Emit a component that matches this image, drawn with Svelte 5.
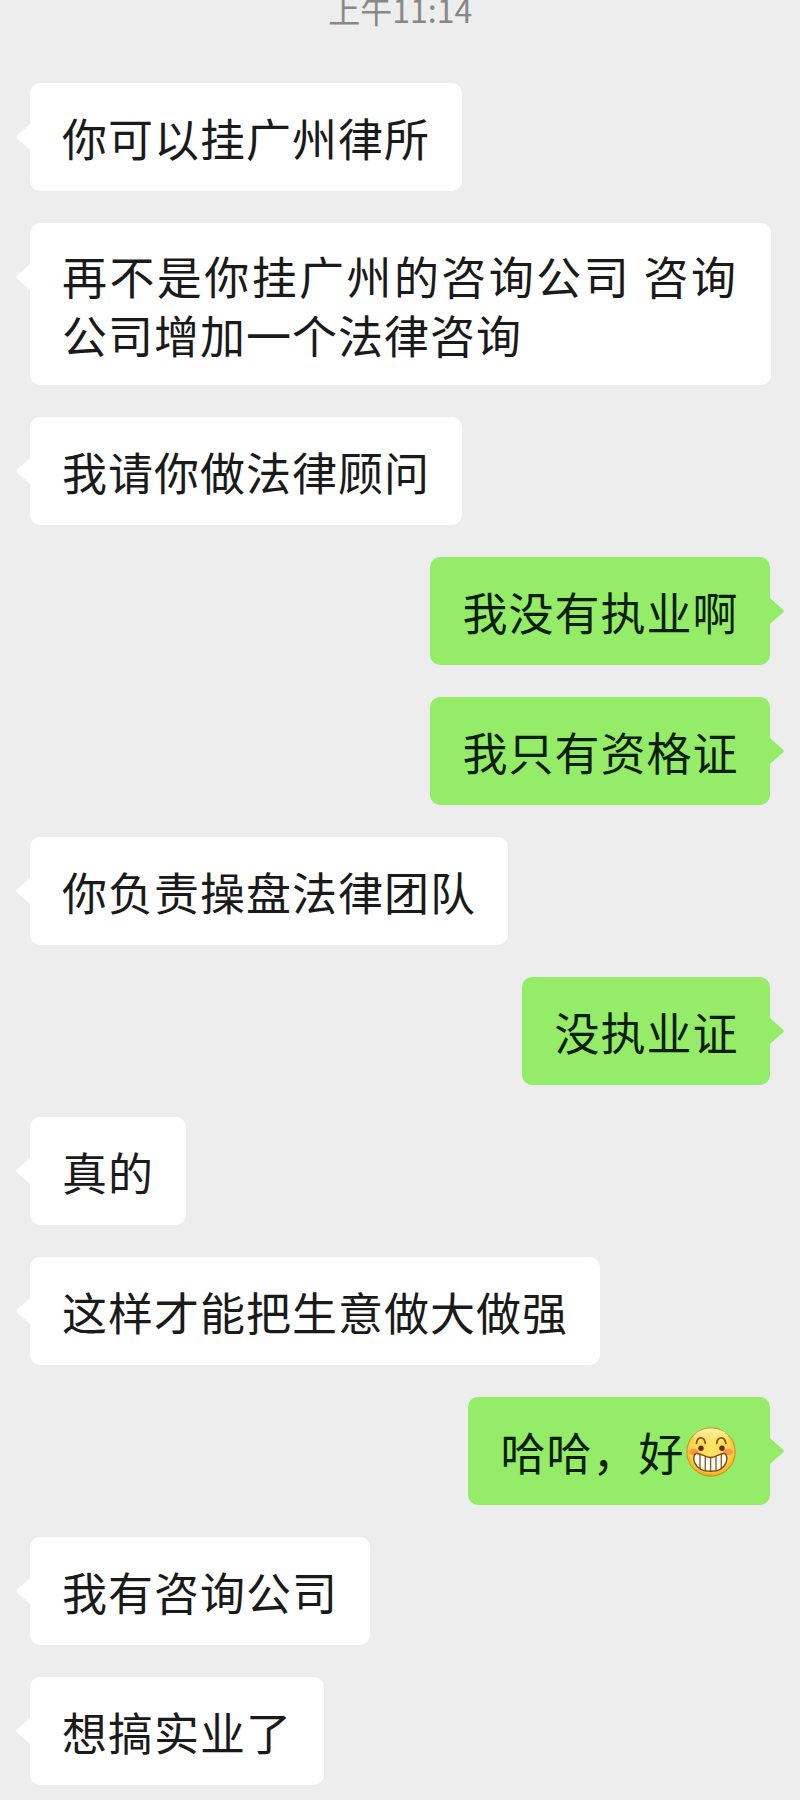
<script>
	// ---- data ----
	const time = '上午11:14';

	const messages = [
		{ id: 1, text: '你可以挂广州律所' },
		{ id: 2, text: '再不是你挂广州的咨询公司 咨询公司增加一个法律咨询', long: true },
		{ id: 3, text: '我请你做法律顾问' },
		{ id: 4, text: '我没有执业啊', mine: true },
		{ id: 5, text: '我只有资格证', mine: true },
		{ id: 6, text: '你负责操盘法律团队' },
		{ id: 7, text: '没执业证', mine: true },
		{ id: 8, text: '真的' },
		{ id: 9, text: '这样才能把生意做大做强' },
		{ id: 10, text: '哈哈，好', mine: true, grin: true },
		{ id: 11, text: '我有咨询公司' },
		{ id: 12, text: '想搞实业了' }
	];

	const mouth =
		'M10 26.5C15 25.5 18 30.5 24.5 30.5S34 25.5 38.5 26.5C43 28 42.5 44.3 24.5 44.3S5.5 28 10 26.5Z';
</script>

{#snippet grinFace()}
	<svg class="emoji" viewBox="0 0 50 50" role="img" aria-label="grin">
		<defs>
			<radialGradient id="face" cx="50%" cy="44%" r="58%">
				<stop offset="0" stop-color="#ffe45f" />
				<stop offset="0.7" stop-color="#ffd84f" />
				<stop offset="0.88" stop-color="#fbb62f" />
				<stop offset="1" stop-color="#e58f17" />
			</radialGradient>
			<linearGradient id="shine" x1="0" y1="0" x2="0" y2="1">
				<stop offset="0" stop-color="#fffbe0" stop-opacity="0.7" />
				<stop offset="1" stop-color="#ffec8a" stop-opacity="0" />
			</linearGradient>
			<clipPath id="mouth">
				<path d={mouth} />
			</clipPath>
		</defs>
		<circle cx="25" cy="25" r="24.2" fill="url(#face)" stroke="#c9821c" stroke-width="0.8" />
		<ellipse cx="25" cy="10.5" rx="17.5" ry="9" fill="url(#shine)" />
		<ellipse cx="8" cy="25" rx="5" ry="3.2" fill="#f5824a" opacity="0.75" />
		<ellipse cx="42" cy="25" rx="5" ry="3.2" fill="#f5824a" opacity="0.75" />
		<g fill="none" stroke="#8a5a10" stroke-width="1.8" stroke-linecap="round">
			<path d="M10.5 16.3C11.3 9 18.3 9 19.3 16.3" />
			<path d="M30.7 16.3C31.5 9 38.8 9 39.8 16.3" />
		</g>
		<circle cx="15" cy="21.2" r="2.7" fill="#6b2c0c" />
		<circle cx="36" cy="21.2" r="2.7" fill="#6b2c0c" />
		<g clip-path="url(#mouth)">
			<rect x="5" y="24" width="40" height="22" fill="#fff" />
			<path d="M14 24V46M19.3 24V46M24.6 24V46M30 24V46M35.3 24V46" stroke="#8a6020" stroke-width="1.4" />
		</g>
		<path d={mouth} fill="none" stroke="#7c4e10" stroke-width="1.5" />
	</svg>
{/snippet}

<main class="chat">
	<div class="time">{time}</div>

	{#each messages as msg (msg.id)}
		<div class="row" class:mine={msg.mine}>
			<div class="bubble" class:long={msg.long}>
				<svg class="tail" viewBox="0 0 15 30" aria-hidden="true">
					<path d="M15 0Q14.5 1.5 13 3L1 13.5Q-0.5 15 1 16.5L13 27Q14.5 28.5 15 30Z" />
				</svg>
				<span class="text">{msg.text}</span>
				{#if msg.grin}
					{@render grinFace()}
				{/if}
			</div>
		</div>
	{/each}
</main>

<style>
	:global(body) {
		background: #ededed;
	}
	.chat {
		box-sizing: border-box;
		display: flex;
		flex-direction: column;
		gap: 32px;
		height: 1800px;
		padding: 0 29px 0 29.6px;
		overflow: hidden;
		background: #ededed;
		font-family: 'Noto Sans CJK SC', sans-serif;
	}
	.time {
		height: 51px;
		flex: none;
		color: #888;
		font-size: 32px;
		line-height: 18px;
		text-align: center;
	}
	.row {
		display: flex;
		flex: none;
	}
	.row.mine {
		justify-content: flex-end;
		padding-right: 1px;
	}
	.bubble {
		--fill: #fff;
		position: relative;
		box-sizing: border-box;
		display: flex;
		align-items: center;
		height: 108px;
		padding: 0 31.6px 0 32.4px;
		border-radius: 10px;
		background: var(--fill);
		color: #1a1a1a;
		font-size: 45px;
		letter-spacing: 1px;
		line-height: 59px;
	}
	.mine .bubble {
		--fill: #95ec69;
		color: #0b1f06;
	}
	.bubble.long {
		width: 742px;
		height: 162px;
		padding-top: 2px;
		padding-right: 34px;
		text-align: justify;
	}
	.tail {
		position: absolute;
		top: 39px;
		left: -14px;
		width: 15px;
		height: 30px;
		fill: var(--fill);
	}
	.mine .tail {
		right: -14px;
		left: auto;
		transform: scaleX(-1);
	}
	.emoji {
		width: 50px;
		height: 50px;
		margin: 1px 2px 0;
	}
</style>
